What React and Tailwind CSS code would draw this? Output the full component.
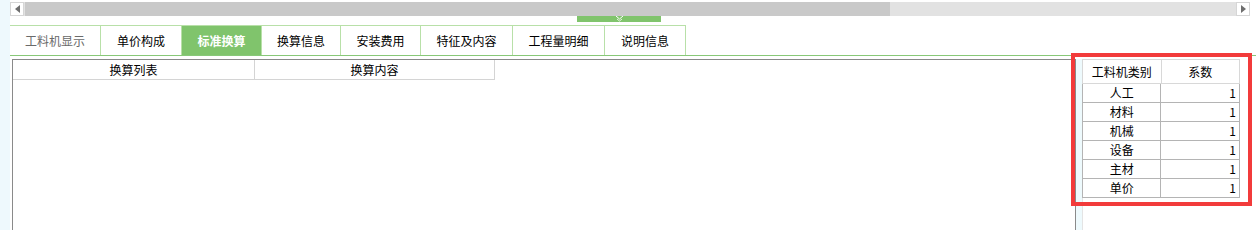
const tabs = [
  { label: '工料机显示', w: 'w-[91px]', muted: true },
  { label: '单价构成', w: 'w-[81px]' },
  { label: '标准换算', w: 'w-[80px]', active: true },
  { label: '换算信息', w: 'w-[79px]' },
  { label: '安装费用', w: 'w-[80px]' },
  { label: '特征及内容', w: 'w-[92px]' },
  { label: '工程量明细', w: 'w-[92px]' },
  { label: '说明信息', w: 'w-[81px]' },
];

const rows = ['人工', '材料', '机械', '设备', '主材', '单价'];

const ArrowBtn = ({ dir }) => (
  <div className="w-[14px] h-[14px] bg-white border border-[#d6d6d6] flex items-center justify-center">
    <svg width="5" height="8" viewBox="0 0 5 8">
      {dir === 'left' ? (
        <polygon points="5,0 5,8 0,4" fill="#6e6e6e" />
      ) : (
        <polygon points="0,0 0,8 5,4" fill="#6e6e6e" />
      )}
    </svg>
  </div>
);

const App = () => {
  return (
    <div className="relative w-[1256px] h-[230px] flex overflow-hidden bg-white text-[12px] text-black font-['Noto_Sans_CJK_SC','Noto_Sans',sans-serif]">
      <div className="w-[10px] bg-[#eef9fd]" />
      <div className="flex-1 flex flex-col">
        <div className="h-[2px]" />
        {/* horizontal scrollbar */}
        <div className="h-[14px] mr-[6px] flex bg-[#e2e2e2]">
          <ArrowBtn dir="left" />
          <div className="ml-[1px] w-[865px] bg-[#c9c9c9]" />
          <div className="flex-1" />
          <ArrowBtn dir="right" />
        </div>
        {/* splitter handle */}
        <div className="h-[9px]">
          <div className="ml-[567px] w-[84px] h-[6px] bg-[#80c46c] flex justify-center">
            <svg width="9" height="6" viewBox="0 0 9 6">
              <polyline points="1,0 4.5,3 8,0" fill="none" stroke="#ffffff" strokeWidth="1" />
              <polyline points="2,3 4.5,5 7,3" fill="none" stroke="#e8f5e2" strokeWidth="1" />
            </svg>
          </div>
        </div>
        {/* tabs */}
        <div className="h-[31px] flex border-b border-[#88c878]">
          {tabs.map((t) => (
            <div
              key={t.label}
              className={`${t.w} h-[30px] flex items-center justify-center border-t border-r border-[#b8e0a8] ${
                t.active
                  ? 'bg-[#80c46c] text-white font-bold'
                  : t.muted
                  ? 'text-[#6a6a6a]'
                  : 'text-black'
              }`}
            >
              {t.label}
            </div>
          ))}
        </div>
        <div className="h-[3px]" />
        {/* content */}
        <div className="flex-1 flex">
          <div className="ml-[2px] w-[1064px] border-l border-t border-r border-[#8a8a8a]">
            <div className="flex h-[20px]">
              <div className="w-[242px] flex items-center justify-center border-r border-b border-[#d4d4d4]">换算列表</div>
              <div className="w-[240px] flex items-center justify-center border-r border-b border-[#d4d4d4]">换算内容</div>
            </div>
          </div>
          <div className="w-[6px] bg-[#eefafd]" />
          <div className="w-[158px] flex flex-col">
            <div className="h-[25px] flex border-t border-l border-[#d8d8d8]">
              <div className="w-[79px] flex items-center justify-center border-r border-b border-[#d8d8d8]">工料机类别</div>
              <div className="w-[79px] flex items-center justify-center border-r border-b border-[#d8d8d8]">系数</div>
            </div>
            {rows.map((r) => (
              <div key={r} className="h-[19px] flex border-l border-[#b4b4b4]">
                <div className="w-[79px] flex items-center justify-center border-r border-b border-[#b4b4b4]">{r}</div>
                <div className="w-[79px] flex items-center justify-end pr-[3px] border-r border-b border-[#b4b4b4]">1</div>
              </div>
            ))}
            <div className="flex-1 border-l border-[#e4e4e4]" />
          </div>
        </div>
      </div>
      {/* highlight annotation */}
      <div className="absolute left-[1071px] top-[53px] w-[181px] h-[153px] border-4 border-[#f23b3b] pointer-events-none" />
    </div>
  );
};

export default App;
